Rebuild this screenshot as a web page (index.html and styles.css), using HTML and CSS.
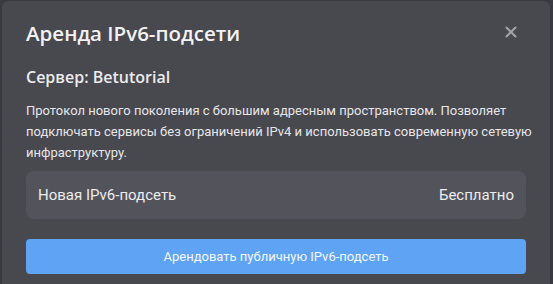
FILE: index.html
```html
<!DOCTYPE html>
<html>
<head>
  <meta charset="utf-8">
  <title>Аренда IPv6-подсети</title>
  <link rel="stylesheet" href="styles.css">
</head>
<body>
  <div class="modal">
    <div class="modal-header">
      <h2>Аренда IPv6-подсети</h2>
      <button class="close-btn" aria-label="Закрыть">
        <svg width="12" height="12" viewBox="0 0 12 12">
          <path d="M1.5 1.5 L10.5 10.5 M10.5 1.5 L1.5 10.5" stroke="currentColor" stroke-width="2" stroke-linecap="round"/>
        </svg>
      </button>
    </div>

    <div class="server-name">Сервер: Betutorial</div>
    <p class="description">
      Протокол нового поколения с большим адресным пространством. Позволяет<br>
      подключать сервисы без ограничений IPv4 и использовать современную сетевую<br>
      инфраструктуру.
    </p>

    <div class="price-row">
      <span>Новая IPv6-подсеть</span>
      <span>Бесплатно</span>
    </div>

    <button class="rent-btn">Арендовать публичную IPv6-подсеть</button>
  </div>
</body>
</html>
```

FILE: styles.css
```css
html, body {
  height: 100%;
}

body {
  font-family: Roboto, "Noto Sans", sans-serif;
  margin: 0;
  padding: 1px 3px 0 2px;
  background: #393941;
  box-sizing: border-box;
  overflow: hidden;
}

.modal {
  background: #48484f;
  border-radius: 6px 6px 0 0;
  padding: 17px 24px 0 24px;
  color: #ececee;
  height: 100%;
  box-sizing: border-box;
}

.modal-header {
  display: flex;
  align-items: center;
  justify-content: space-between;
}

.modal-header h2 {
  margin: 0;
  font-family: "Open Sans", Roboto, sans-serif;
  font-size: 20.5px;
  font-weight: 600;
  line-height: 30px;
  color: #f2f2f4;
}

.close-btn {
  background: none;
  border: none;
  padding: 0;
  margin: 0 9px 2px 0;
  color: #a3a3aa;
  display: flex;
  cursor: pointer;
}

.server-name {
  margin-top: 18px;
  font-family: "Open Sans", Roboto, sans-serif;
  font-size: 16px;
  font-weight: 600;
  line-height: 22px;
}

.description {
  margin: 12px 0 0;
  font-size: 13px;
  line-height: 21px;
  white-space: nowrap;
  color: #e6e6e9;
}

.price-row {
  margin-top: 8px;
  display: flex;
  justify-content: space-between;
  align-items: center;
  background: #53535b;
  border-radius: 8px;
  height: 48px;
  padding: 0 12px;
  font-size: 15px;
}

.rent-btn {
  display: block;
  width: 100%;
  margin-top: 20px;
  height: 35px;
  border: none;
  border-radius: 4px;
  background: #5ea3f4;
  color: #f4f8ff;
  font-family: Roboto, "Noto Sans", sans-serif;
  font-size: 13px;
  cursor: pointer;
}
```
